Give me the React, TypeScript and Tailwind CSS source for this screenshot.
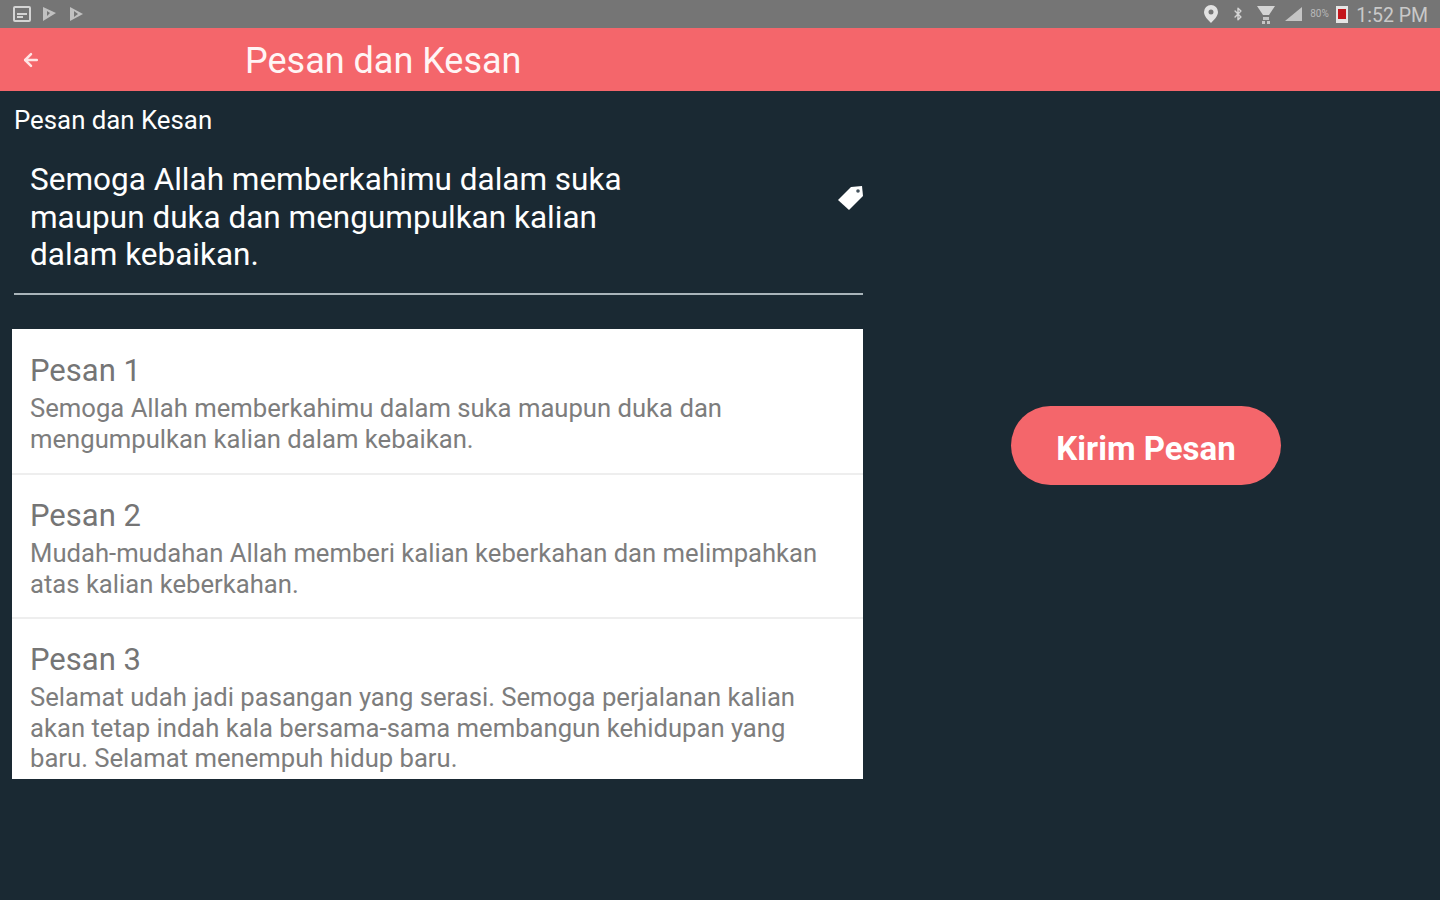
import { ArrowLeft, Bluetooth } from "lucide-react";

const MESSAGES = [
  { title: "Pesan 1", lines: ["Semoga Allah memberkahimu dalam suka maupun duka dan", "mengumpulkan kalian dalam kebaikan."], box: "h-[146px] pt-[23px] border-b-2 border-[#eeeeee]" },
  { title: "Pesan 2", lines: ["Mudah-mudahan Allah memberi kalian keberkahan dan melimpahkan", "atas kalian keberkahan."], box: "h-[144px] pt-[22px] border-b-2 border-[#eeeeee]" },
  { title: "Pesan 3", lines: ["Selamat udah jadi pasangan yang serasi. Semoga perjalanan kalian", "akan tetap indah kala bersama-sama membangun kehidupan yang", "baru. Selamat menempuh hidup baru."], box: "h-[160px] pt-[22px]" },
];

function StatusBar() {
  return (
    <div className="h-[28px] bg-[#757575] flex items-center justify-between pl-[12px] pr-[12px] text-[#d4d4d4]">
      <div className="flex items-center gap-[9px]">
        <svg width="20" height="18" viewBox="0 0 20 18" fill="none" stroke="currentColor" strokeWidth="2">
          <rect x="2" y="2" width="16" height="14" rx="1" />
          <path d="M5 9h10M5 12h6" />
        </svg>
        <svg width="18" height="18" viewBox="0 0 18 18" fill="currentColor">
          <path d="M2 2l13 6-13 8z" opacity="0.8" />
          <path d="M6 6l3 2-3 3z" fill="#757575" />
        </svg>
        <svg width="18" height="18" viewBox="0 0 18 18" fill="currentColor">
          <path d="M2 2l13 7-13 7z" opacity="0.8" />
          <path d="M6 6l4 3-4 3z" fill="#757575" />
        </svg>
      </div>
      <div className="flex items-center">
        <svg width="16" height="20" viewBox="0 0 16 20" className="mr-[12px]">
          <path fillRule="evenodd" fill="#e2e2e2" d="M8 1a7 7 0 0 1 7 7c0 4-4 8-7 11-3-3-7-7-7-11a7 7 0 0 1 7-7zm0 4.5a2.5 2.5 0 1 0 0 5 2.5 2.5 0 0 0 0-5z" />
        </svg>
        <Bluetooth size={14} strokeWidth={2.5} className="mr-[11px]" />
        <svg width="20" height="20" viewBox="0 0 20 20" fill="#d4d4d4" className="mr-[8px]">
          <path d="M1 2h18l-6 9H7z" />
          <path d="M7 13h6v3H7zM6 17h3v3H6zM11 17h3v3h-3z" opacity="0.85" />
        </svg>
        <svg width="20" height="16" viewBox="0 0 20 16" fill="currentColor" className="mr-[6px]">
          <path d="M1 15L18 1v14z" opacity="0.85" />
        </svg>
        <span className="text-[10px] leading-none w-[26px] opacity-70">80%</span>
        <div className="w-[12px] h-[17px] bg-[#e5e5e5] flex items-center px-[2px] mr-[8px]">
          <div className="w-full h-[10px] bg-[#c4161c]" />
        </div>
        <span className="text-[19.5px] leading-none mt-[3px] text-[#c9c9c9]">1:52 PM</span>
      </div>
    </div>
  );
}

export default function App() {
  return (
    <div className="w-[1440px] h-[900px] overflow-hidden bg-[#1a2933] font-['Roboto',sans-serif] flex flex-col">
      <StatusBar />
      {/* Toolbar */}
      <div className="h-[63px] bg-[#f4666b] flex items-center pl-[21px] text-white">
        <ArrowLeft size={20} strokeWidth={3} className="text-[#ffe4e4]" />
        <span className="ml-[204px] pt-[3px] text-[36px] leading-none text-[#fff5f5]">Pesan dan Kesan</span>
      </div>

      <div className="flex flex-1">
        {/* Left column */}
        <div className="w-[875px] pl-[12px] pr-[12px]">
          <p className="mt-[14px] ml-[2px] text-[25.8px] leading-[30px] text-white">Pesan dan Kesan</p>
          <div className="ml-[2px] mt-[26px] h-[134px] border-b-2 border-[#a9b4ba]">
            <p className="ml-[16px] text-[31.5px] leading-[37.5px] text-white w-[640px]">
              Semoga Allah memberkahimu dalam suka maupun duka dan mengumpulkan kalian dalam kebaikan.
            </p>
          </div>
          <svg width="30" height="30" viewBox="0 0 30 30" className="absolute left-[835px] top-[183px]">
            <path d="M3 17L16 4l11-1 1 10-14 14z" fill="#fff" />
            <circle cx="23" cy="8" r="1.8" fill="#44525c" />
          </svg>
          <div className="mt-[34px] w-[851px] bg-white">
            {MESSAGES.map((m) => (
              <div key={m.title} className={`${m.box} px-[18px]`}>
                <p className="text-[31px] leading-[38px] text-[#757575]">{m.title}</p>
                <div className="mt-[3px] text-[25.65px] leading-[30.5px] text-[#7d7d7d]">
                  {m.lines.map((l) => (
                    <p key={l} className="whitespace-nowrap">{l}</p>
                  ))}
                </div>
              </div>
            ))}
          </div>
        </div>

        {/* Right column */}
        <div className="flex-1 pl-[136px] pt-[315px]">
          <button className="w-[270px] h-[79px] pt-[6px] rounded-full bg-[#f4666b] text-white text-[33px] font-bold">Kirim Pesan</button>
        </div>
      </div>
    </div>
  );
}
